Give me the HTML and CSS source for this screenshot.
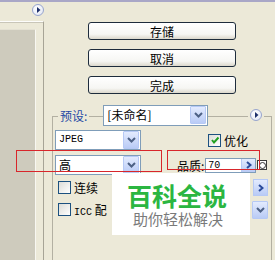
FILE: index.html
```html
<!DOCTYPE html>
<html lang="zh-CN">
<head>
    <meta charset="UTF-8">
    <title>存储为 Web 所用格式</title>
    <link rel="stylesheet" href="styles.css">
</head>
<body>

<div class="window">
    <div class="topbar"></div>
    <div class="main">
        <div class="preview-col">
            <span class="menu-btn"><svg width="5" height="6" viewBox="0 0 5 6"><path d="M1 0 L4.5 3 L1 6 Z" fill="#1d2f6a"/></svg></span>
            <div class="preview-frame">
                <div class="preview"></div>
            </div>
        </div>

        <div class="side">
            <div class="actions">
                <button class="xp-btn">存储</button>
                <button class="xp-btn">取消</button>
                <button class="xp-btn">完成</button>
            </div>

            <div class="group">
                <div class="group-head">
                    <span class="group-label">预设:</span>
                    <div class="dropdown preset">
                        <span class="dd-text">[未命名]</span>
                        <span class="dd-arrow"><svg width="9" height="6" viewBox="0 0 9 6"><path d="M1 1 L4.5 4.5 L8 1" fill="none" stroke="#4d6185" stroke-width="2"/></svg></span>
                    </div>
                    <span class="spacer"></span>
                    <span class="circle-wrap"><span class="menu-btn"><svg width="5" height="6" viewBox="0 0 5 6"><path d="M1 0 L4.5 3 L1 6 Z" fill="#1d2f6a"/></svg></span></span>
                </div>

                <div class="row row-a">
                    <div class="dropdown narrow">
                        <span class="dd-text mono">JPEG</span>
                        <span class="dd-arrow"><svg width="9" height="6" viewBox="0 0 9 6"><path d="M1 1 L4.5 4.5 L8 1" fill="none" stroke="#4d6185" stroke-width="2"/></svg></span>
                    </div>
                    <label class="check optimize">
                        <span class="box checked"><svg width="10" height="10" viewBox="0 0 10 10"><path d="M2 5 L4 7.5 L8.5 2.5" fill="none" stroke="#21a121" stroke-width="2"/></svg></span>
                        优化
                    </label>
                </div>

                <div class="row row-b">
                    <div class="dropdown narrow">
                        <span class="dd-text">高</span>
                        <span class="dd-arrow"><svg width="9" height="6" viewBox="0 0 9 6"><path d="M1 1 L4.5 4.5 L8 1" fill="none" stroke="#4d6185" stroke-width="2"/></svg></span>
                    </div>
                    <span class="field-label">品质:</span>
                    <div class="num-field">
                        <span class="mono">70</span>
                        <span class="step-btn"><svg width="6" height="8" viewBox="0 0 6 8"><path d="M1 1 L4.5 4 L1 7" fill="none" stroke="#2a4b9b" stroke-width="2"/></svg></span>
                    </div>
                    <span class="round-toggle"><span class="ring"></span></span>
                </div>

                <div class="row row-c">
                    <label class="check"><span class="box"></span>连续</label>
                    <span class="spacer"></span>
                    <span class="step-btn tall"><svg width="6" height="8" viewBox="0 0 6 8"><path d="M1 1 L4.5 4 L1 7" fill="none" stroke="#2a4b9b" stroke-width="2"/></svg></span>
                </div>

                <div class="row row-d">
                    <label class="check"><span class="box"></span><span><span class="mono">ICC</span> 配</span></label>
                    <span class="spacer"></span>
                    <span class="bracket">]</span>
                    <span class="dd-arrow"><svg width="9" height="6" viewBox="0 0 9 6"><path d="M1 1 L4.5 4.5 L8 1" fill="none" stroke="#4d6185" stroke-width="2"/></svg></span>
                </div>
            </div>
        </div>
    </div>

    <!-- markers drawn over the dialog -->
    <div class="mark mark-format"></div>
    <div class="mark mark-quality"></div>

    <div class="watermark">
        <div class="wm-title">百科全说</div>
        <div class="wm-sub">助你轻松解决</div>
    </div>
</div>

</body>
</html>
```

FILE: styles.css
```css
body {
    margin: 0;
    background-color: #ece9d8;
    font-family: "Noto Sans CJK SC", "Liberation Sans", sans-serif;
    font-size: 12px;
    color: #000;
}

.window {
    position: relative;
    width: 275px;
    height: 260px;
    overflow: hidden;
    background-color: #ece9d8;
}

.topbar {
    height: 2px;
    background-color: #a9a7c7;
}

.main {
    display: flex;
}

.mono {
    font-family: "Liberation Mono", monospace;
    font-size: 10px;
}

/* preview side */
.preview-col {
    width: 44px;
    flex-shrink: 0;
    display: flex;
    flex-direction: column;
}

.menu-btn {
    display: flex;
    align-items: center;
    justify-content: center;
    width: 10px;
    height: 10px;
    border: 1px solid #98a5cf;
    border-radius: 50%;
    background: radial-gradient(circle at 40% 35%, #ffffff, #dfe4f2);
}

.preview-col > .menu-btn {
    margin: 2px 0 0 32px;
}

.preview-frame {
    margin-top: 5px;
    height: 240px;
    border-top: 1px solid #fdfdfb;
    border-right: 1px solid #a7a496;
    box-shadow: inset 0 1px 0 #c9c6b8;
    padding-top: 7px;
}

.preview {
    width: 35px;
    height: 240px;
    background-color: #cecbbd;
    border-top: 1px solid #e4e1d3;
    border-right: 1px solid #f8f7f1;
}

/* buttons and settings */
.side {
    flex: 1;
}

.actions {
    display: flex;
    flex-direction: column;
    gap: 9px;
    margin: 20px 0 0 44px;
    width: 148px;
}

.xp-btn {
    height: 18px;
    padding: 0;
    font-family: inherit;
    font-size: 12px;
    line-height: 15px;
    color: #000;
    border: 1px solid #1e2c3c;
    border-radius: 3px;
    background: linear-gradient(#ffffff, #f6f6f3 70%, #dcd8cc);
}

.group {
    margin: 22px 0 0 8px;
    width: 218px;
    height: 200px;
    border: 1px solid #b3b0a2;
    border-bottom: none;
}

.group-head {
    display: flex;
    align-items: center;
    height: 20px;
    margin-top: -12px;
    padding: 0 7px 0 5px;
}

.group-label {
    background-color: #ece9d8;
    color: #1f4aa6;
    padding: 0 2px;
    margin-right: 14px;
}

.spacer {
    flex: 1;
}

.circle-wrap {
    background-color: #ece9d8;
    padding: 0 2px;
}

.dropdown {
    display: flex;
    align-items: center;
    justify-content: space-between;
    height: 18px;
    border: 1px solid #7f9db9;
    background-color: #fff;
    padding-left: 3px;
}

.dropdown.preset {
    width: 100px;
    height: 19px;
}

.dropdown.narrow {
    width: 81px;
    margin-left: 2px;
}

.dd-text {
    line-height: 16px;
}

.dd-arrow {
    display: flex;
    align-items: center;
    justify-content: center;
    width: 14px;
    height: 16px;
    margin-right: 1px;
    border: 1px solid #b6c9f5;
    border-radius: 1px;
    background: linear-gradient(#e3ebfe, #b9cbf6);
}

.row {
    display: flex;
    align-items: center;
}

.row-a {
    height: 20px;
    margin-top: 5px;
}

.row-b {
    height: 20px;
    margin-top: 5px;
}

.row-c {
    height: 15px;
    margin-top: 5px;
    padding-right: 3px;
}

.row-d {
    height: 15px;
    margin-top: 7px;
    padding-right: 2px;
}

.check {
    display: flex;
    align-items: center;
    gap: 3px;
    margin-left: 5px;
    white-space: nowrap;
}

.check.optimize {
    margin-left: 67px;
}

.box {
    display: flex;
    align-items: center;
    justify-content: center;
    width: 11px;
    height: 11px;
    border: 1px solid #1c5180;
    background: linear-gradient(135deg, #dcdcd7, #ffffff);
}

.field-label {
    margin-left: 36px;
}

.num-field {
    display: flex;
    align-items: center;
    justify-content: space-between;
    width: 47px;
    height: 13px;
    margin-left: 1px;
    padding-left: 2px;
    border: 1px solid #7f9db9;
    background-color: #fff;
}

.step-btn {
    display: flex;
    align-items: center;
    justify-content: center;
    width: 13px;
    height: 13px;
    border-left: 1px solid #b6c9f5;
    background: linear-gradient(#e3ebfe, #b9cbf6);
}

.step-btn.tall {
    height: 15px;
    border: 1px solid #b6c9f5;
}

.bracket {
    margin-right: 2px;
}

.round-toggle {
    display: flex;
    align-items: center;
    justify-content: center;
    width: 8px;
    height: 8px;
    margin-left: 1px;
    border: 1px solid #3b3b3b;
    background-color: #fff;
}

.ring {
    width: 5px;
    height: 5px;
    border: 1px solid #333;
    border-radius: 50%;
}

/* overlays */
.mark {
    position: absolute;
    border: 1px solid #d8262b;
}

.mark-format {
    left: 16px;
    top: 150px;
    width: 144px;
    height: 20px;
}

.mark-quality {
    left: 167px;
    top: 150px;
    width: 91px;
    height: 18px;
}

.watermark {
    position: absolute;
    left: 112px;
    top: 173px;
    width: 138px;
    height: 62px;
    background-color: #fff;
    padding: 9px 0 0 15px;
    box-sizing: border-box;
}

.wm-title {
    font-size: 25px;
    font-weight: bold;
    line-height: 26px;
    color: #2bb641;
}

.wm-sub {
    margin-top: 3px;
    font-size: 15px;
    line-height: 16px;
    color: #7a7a7a;
    padding-left: 6px;
}
```
